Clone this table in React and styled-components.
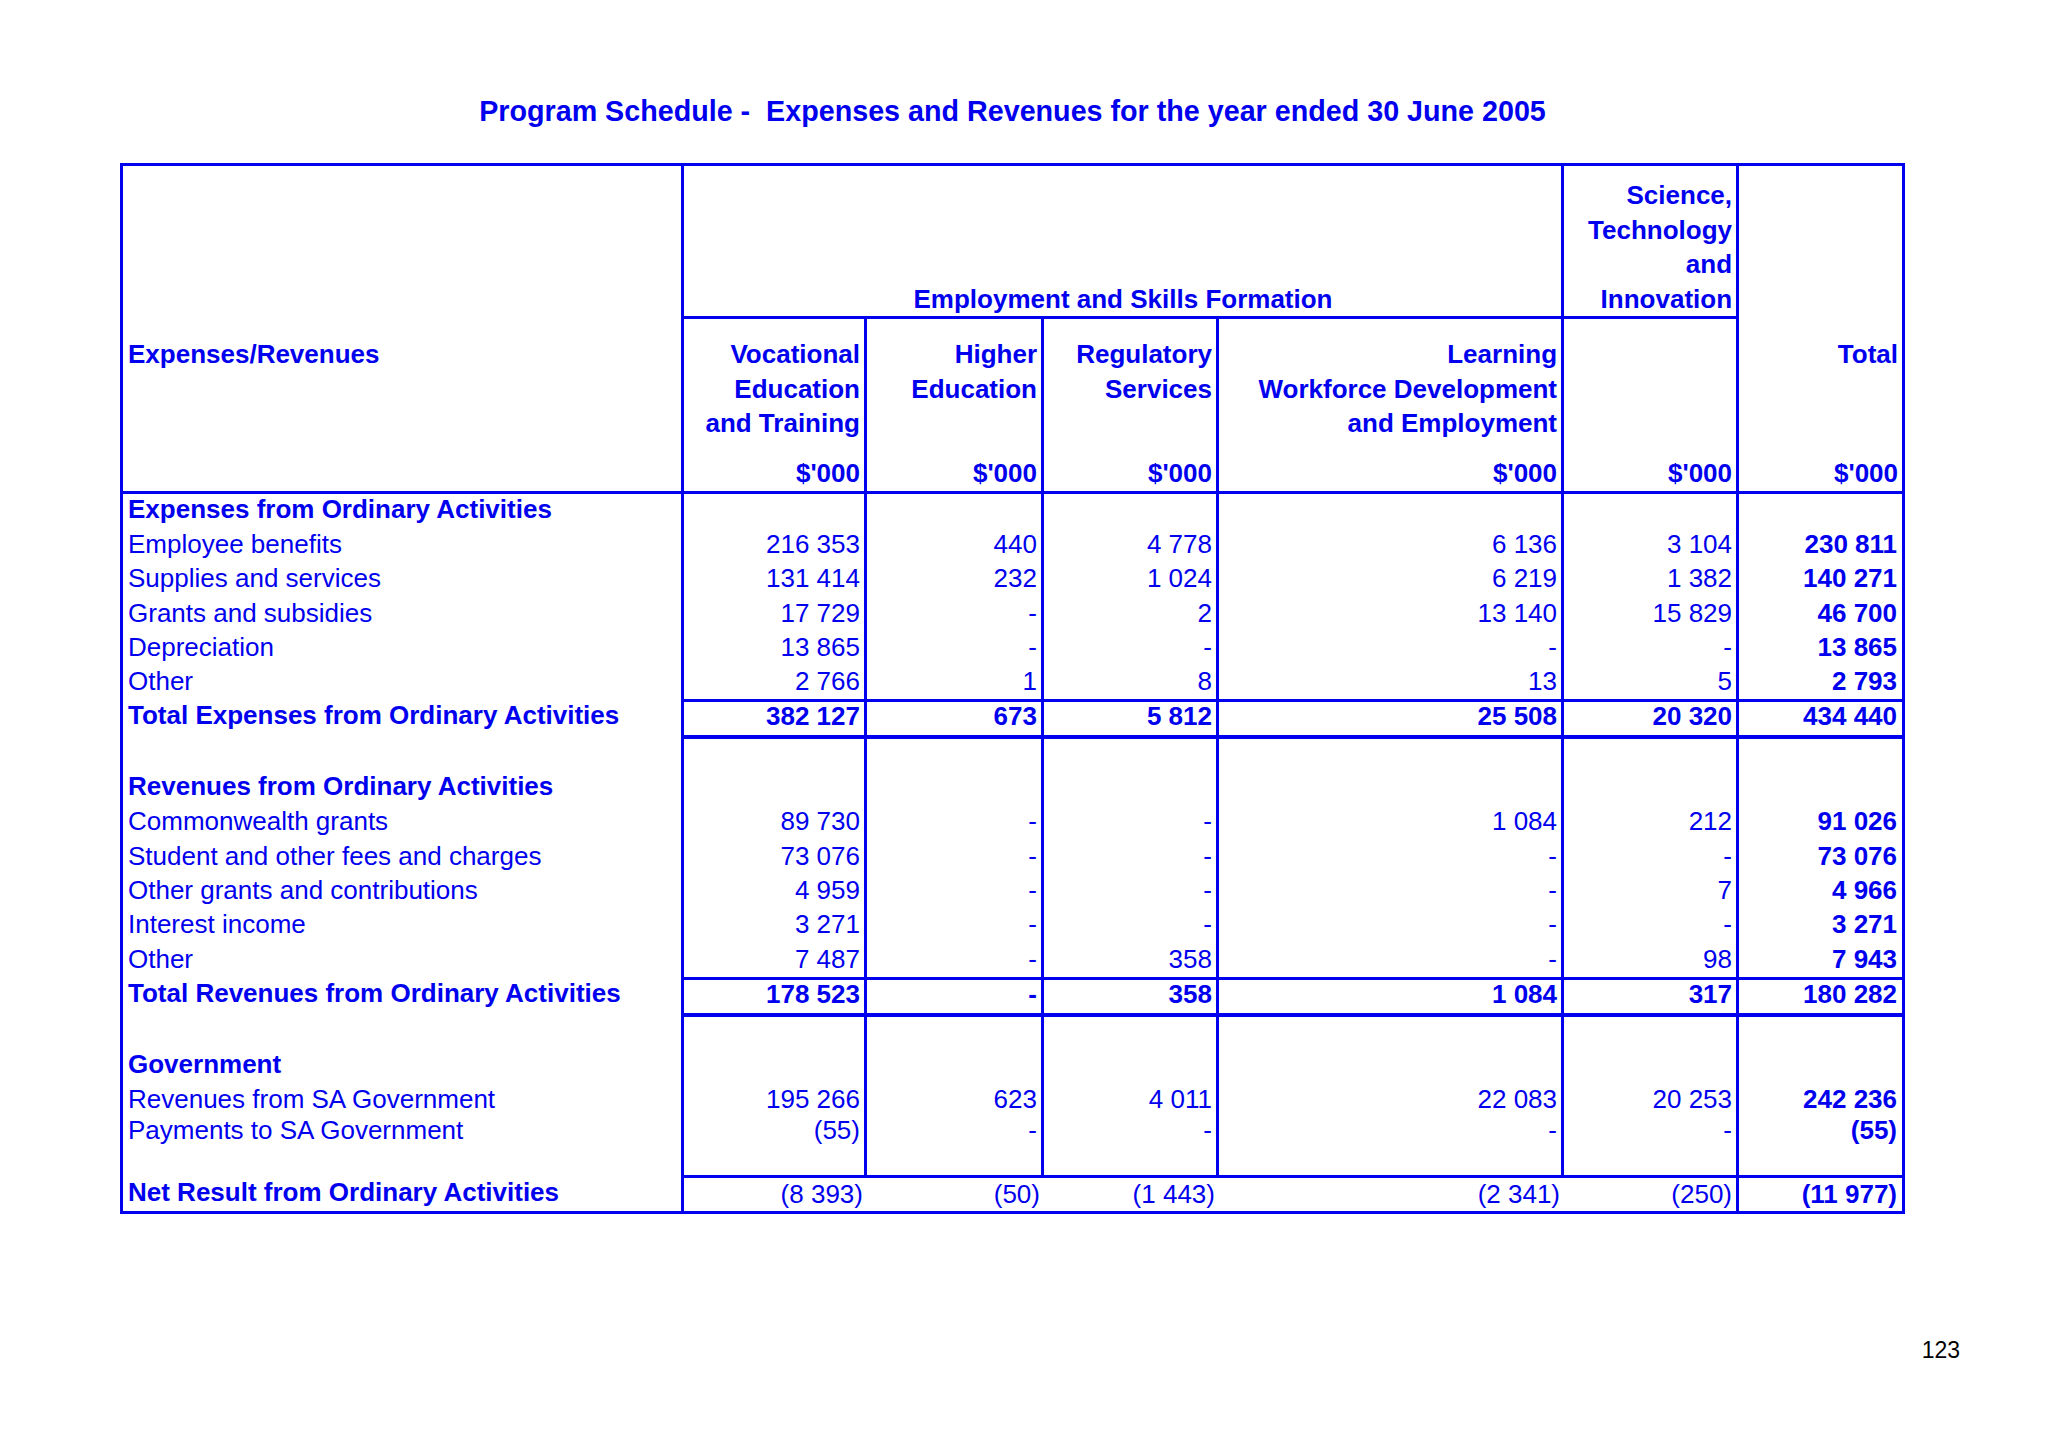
import React from 'react';
import styled, { createGlobalStyle } from 'styled-components';

const BLUE = '#0000ee';
const LINE = `3px solid ${BLUE}`;

const columns = [561, 183, 177, 175, 345, 175, 163];

const expenses = [
    { label: 'Employee benefits', values: ['216 353', '440', '4 778', '6 136', '3 104', '230 811'], h: 34 },
    { label: 'Supplies and services', values: ['131 414', '232', '1 024', '6 219', '1 382', '140 271'], h: 35 },
    { label: 'Grants and subsidies', values: ['17 729', '-', '2', '13 140', '15 829', '46 700'], h: 34 },
    { label: 'Depreciation', values: ['13 865', '-', '-', '-', '-', '13 865'], h: 35 },
    { label: 'Other', values: ['2 766', '1', '8', '13', '5', '2 793'], h: 33 },
];
const expensesTotal = ['382 127', '673', '5 812', '25 508', '20 320', '434 440'];

const revenues = [
    { label: 'Commonwealth grants', values: ['89 730', '-', '-', '1 084', '212', '91 026'], h: 35 },
    { label: 'Student and other fees and charges', values: ['73 076', '-', '-', '-', '-', '73 076'], h: 34 },
    { label: 'Other grants and contributions', values: ['4 959', '-', '-', '-', '7', '4 966'], h: 34 },
    { label: 'Interest income', values: ['3 271', '-', '-', '-', '-', '3 271'], h: 35 },
    { label: 'Other', values: ['7 487', '-', '358', '-', '98', '7 943'], h: 34 },
];
const revenuesTotal = ['178 523', '-', '358', '1 084', '317', '180 282'];

const government = [
    { label: 'Revenues from SA Government', values: ['195 266', '623', '4 011', '22 083', '20 253', '242 236'], h: 34 },
    { label: 'Payments to SA Government', values: ['(55)', '-', '-', '-', '-', '(55)'], h: 26, lift: 0 },
];
const netResult = ['(8 393)', '(50)', '(1 443)', '(2 341)', '(250)', '(11 977)'];

const GlobalStyle = createGlobalStyle`
    html, body {
        margin: 0;
        background: #ffffff;
    }
    body {
        font-family: "Liberation Sans", Arial, sans-serif;
        color: ${BLUE};
    }
`;

const Page = styled.div`
    width: 2048px;
    height: 1448px;
    box-sizing: border-box;
    padding: 91px 0 0 120px;
`;

const Sheet = styled.div`
    width: 1785px;
`;

const Title = styled.h1`
    margin: 0 0 32px;
    font-size: 28.7px;
    line-height: 40px;
    font-weight: bold;
    text-align: center;
    white-space: pre;
`;

const Table = styled.table`
    width: 1785px;
    table-layout: fixed;
    border-collapse: separate;
    border-spacing: 0;
    border: ${LINE};
    font-size: 26px;
`;

const Col = styled.col`
    width: ${({ $w }) => $w}px;
`;

const Row = styled.tr`
    height: ${({ $h }) => $h}px;
`;

const HeadCell = styled.th`
    box-sizing: border-box;
    padding: ${({ $pad }) => ($pad ? '18px 4px 0 5px' : '0 4px 0 5px')};
    font-weight: bold;
    line-height: 34.5px;
    white-space: nowrap;
    text-align: ${({ $align }) => $align || 'right'};
    vertical-align: ${({ $valign }) => $valign || 'top'};
    border-right: ${({ $last }) => ($last ? 'none' : LINE)};
    border-bottom: ${({ $under }) => ($under ? LINE : 'none')};
`;

const Cell = styled.td`
    box-sizing: border-box;
    padding: 0 ${({ $last }) => ($last ? '5px' : '4px')} ${({ $lift }) => ($lift ?? 2)}px 5px;
    line-height: 26px;
    white-space: nowrap;
    vertical-align: middle;
    text-align: right;
    font-weight: ${({ $bold }) => ($bold ? 'bold' : 'normal')};
    border-right: ${({ $last, $open }) => ($last || $open ? 'none' : LINE)};
    border-top: ${({ $ruleTop }) => ($ruleTop ? LINE : 'none')};
    border-bottom: ${({ $ruleBottom }) => ($ruleBottom ? `${$ruleBottom}px solid ${BLUE}` : 'none')};
`;

const LabelCell = styled(Cell)`
    text-align: left;
`;

const PageNumber = styled.div`
    width: 1840px;
    margin-top: 121px;
    font-size: 23px;
    line-height: 30px;
    text-align: right;
    color: #000000;
`;

const LineRow = ({ label, values, h, lift }) => (
    <Row $h={h}>
        <LabelCell $lift={lift}>{label}</LabelCell>
        {values.map((v, i) => (
            <Cell key={i} $lift={lift} $last={i === values.length - 1} $bold={i === values.length - 1}>{v}</Cell>
        ))}
    </Row>
);

const HeadingRow = ({ label, h = 34 }) => (
    <Row $h={h}>
        <LabelCell $bold $lift={4}>{label}</LabelCell>
        {columns.slice(1).map((_, i) => (
            <Cell key={i} $last={i === columns.length - 2} />
        ))}
    </Row>
);

const SpacerRow = ({ h }) => <HeadingRow label="" h={h} />;

const TotalRow = ({ label, values }) => (
    <Row $h={40}>
        <LabelCell $bold $lift={7}>{label}</LabelCell>
        {values.map((v, i) => (
            <Cell key={i} $bold $lift={5} $ruleTop $ruleBottom={4} $last={i === values.length - 1}>{v}</Cell>
        ))}
    </Row>
);

const NetRow = ({ label, values }) => (
    <Row $h={36}>
        <LabelCell $bold $lift={1}>{label}</LabelCell>
        {values.map((v, i) => (
            <Cell
                key={i}
                $ruleTop
                $lift={1}
                $bold={i === values.length - 1}
                $last={i === values.length - 1}
                $open={i < 4}
            >
                {v}
            </Cell>
        ))}
    </Row>
);

const App = () => {
    const units = columns.slice(1);

    return (
        <Page>
            <GlobalStyle />
            <Sheet>
                <Title>{'Program Schedule -  Expenses and Revenues for the year ended 30 June 2005'}</Title>
                <Table>
                    <colgroup>
                        {columns.map((w, i) => <Col key={i} $w={w} />)}
                    </colgroup>
                    <thead>
                        <Row $h={153}>
                            <HeadCell />
                            <HeadCell colSpan={4} $align="center" $valign="bottom" $under>
                                Employment and Skills Formation
                            </HeadCell>
                            <HeadCell $valign="bottom" $under>
                                Science,<br />Technology<br />and<br />Innovation
                            </HeadCell>
                            <HeadCell $last />
                        </Row>
                        <Row $h={137}>
                            <HeadCell $align="left" $pad>Expenses/Revenues</HeadCell>
                            <HeadCell $pad>Vocational<br />Education<br />and Training</HeadCell>
                            <HeadCell $pad>Higher<br />Education</HeadCell>
                            <HeadCell $pad>Regulatory<br />Services</HeadCell>
                            <HeadCell $pad>Learning<br />Workforce Development<br />and Employment</HeadCell>
                            <HeadCell $pad />
                            <HeadCell $pad $last>Total</HeadCell>
                        </Row>
                        <Row $h={36}>
                            <HeadCell $under />
                            {units.map((_, i) => (
                                <HeadCell key={i} $under $valign="bottom" $last={i === units.length - 1}>$'000</HeadCell>
                            ))}
                        </Row>
                    </thead>
                    <tbody>
                        <HeadingRow label="Expenses from Ordinary Activities" />
                        {expenses.map((r) => <LineRow key={r.label} {...r} />)}
                        <TotalRow label="Total Expenses from Ordinary Activities" values={expensesTotal} />
                        <SpacerRow h={32} />
                        <HeadingRow label="Revenues from Ordinary Activities" />
                        {revenues.map((r) => <LineRow key={'r' + r.label} {...r} />)}
                        <TotalRow label="Total Revenues from Ordinary Activities" values={revenuesTotal} />
                        <SpacerRow h={32} />
                        <HeadingRow label="Government" />
                        {government.map((r) => <LineRow key={r.label} {...r} />)}
                        <SpacerRow h={32} />
                        <NetRow label="Net Result from Ordinary Activities" values={netResult} />
                    </tbody>
                </Table>
                <PageNumber>123</PageNumber>
            </Sheet>
        </Page>
    );
};

export default App;
